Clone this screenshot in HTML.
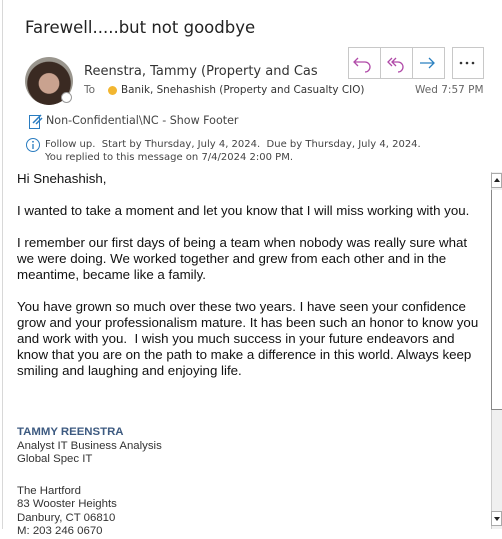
<!DOCTYPE html>
<html><head><meta charset="utf-8"><style>
body{margin:0;width:502px;height:529px;overflow:hidden;background:#fff;font-family:"Liberation Sans",Arial,sans-serif;position:relative}
.a{position:absolute;white-space:nowrap}
.seg{font-family:"DejaVu Sans","Liberation Sans",sans-serif}
.btn{position:absolute;top:47px;height:32px;border:1px solid #c8c8c8;box-sizing:border-box}
.body{position:absolute;left:17px;top:171px;font-size:13.3px;line-height:16px;color:#111}
.body p{margin:0 0 16px 0}
.sig{font-size:11.4px;line-height:13.5px;color:#333}
</style></head><body>
<div class="a" style="left:2px;top:0;width:1px;height:529px;background:#d8d8d8"></div>
<div class="a seg" style="left:25px;top:18px;font-size:16.5px;color:#222">Farewell.....but not goodbye</div>
<div class="btn" style="left:348px;width:97px"></div>
<div class="a" style="left:380px;top:47px;width:1px;height:32px;background:#c8c8c8"></div>
<div class="a" style="left:412px;top:47px;width:1px;height:32px;background:#c8c8c8"></div>
<div class="btn" style="left:452px;width:32px"></div>
<svg class="a" style="left:348px;top:47px" width="136" height="32" viewBox="0 0 136 32" fill="none">
<path d="M10 11 L6 15 L10 19 M6 15 H17 A5 5 0 0 1 17 25" stroke="#b04aa8" stroke-width="1.3"/>
<path d="M44 11 L40 15 L44 19 M48 11 L44 15 L48 19 M44 15 H50 A5 5 0 0 1 50 25" stroke="#b04aa8" stroke-width="1.3"/>
<path d="M72 16 H86 M81 11 L86 16 L81 21" stroke="#2a80c0" stroke-width="1.3"/>
<circle cx="113" cy="16" r="1.3" fill="#333"/><circle cx="119" cy="16" r="1.3" fill="#333"/><circle cx="125" cy="16" r="1.3" fill="#333"/>
</svg>
<div class="a" style="left:25px;top:57px;width:48px;height:48px;border-radius:50%;background:radial-gradient(circle at 50% 55%,#c9a28f 0 28%,#3a2a22 30% 60%,#9a968e 62%)"></div>
<div class="a" style="left:61px;top:92px;width:11px;height:11px;border-radius:50%;background:#fff;border:1px solid #999;box-sizing:border-box"></div>
<div class="a seg" style="left:84px;top:64px;font-size:13px;color:#333">Reenstra, Tammy (Property and Cas</div>
<div class="a seg" style="left:84px;top:84px;font-size:10.5px;color:#666">To</div>
<div class="a" style="left:108px;top:86px;width:9px;height:9px;border-radius:50%;background:#f2b630"></div>
<div class="a seg" style="left:121px;top:84px;font-size:10.4px;color:#333">Banik, Snehashish (Property and Casualty CIO)</div>
<div class="a seg" style="left:415px;top:84px;font-size:10.5px;color:#666">Wed 7:57 PM</div>
<svg class="a" style="left:28px;top:112px" width="16" height="18" viewBox="0 0 16 18" fill="none"><rect x="1.5" y="3.5" width="10" height="13" stroke="#2a7cc0"/><path d="M5 11 L13 3 M8 12 L14 6" stroke="#2a7cc0" stroke-width="1.5"/></svg>
<div class="a seg" style="left:46px;top:114px;font-size:11.1px;color:#444">Non-Confidential\NC - Show Footer</div>
<svg class="a" style="left:25px;top:137px" width="16" height="16" viewBox="0 0 16 16" fill="none"><circle cx="8" cy="8" r="6.5" stroke="#2a7cc0"/><path d="M8 7 V12" stroke="#2a7cc0" stroke-width="1.3"/><circle cx="8" cy="4.8" r="0.9" fill="#2a7cc0"/></svg>
<div class="a seg" style="left:45px;top:138px;font-size:10px;color:#444;line-height:13px">Follow up.&nbsp; Start by Thursday, July 4, 2024.&nbsp; Due by Thursday, July 4, 2024.<br>You replied to this message on 7/4/2024 2:00 PM.</div>
<div class="body">
<p>Hi Snehashish,</p>
<p>I wanted to take a moment and let you know that I will miss working with you.</p>
<p>I remember our first days of being a team when nobody was really sure what<br>we were doing. We worked together and grew from each other and in the<br>meantime, became like a family.</p>
<p>You have grown so much over these two years. I have seen your confidence<br>grow and your professionalism mature. It has been such an honor to know you<br>and work with you.&nbsp; I wish you much success in your future endeavors and<br>know that you are on the path to make a difference in this world. Always keep<br>smiling and laughing and enjoying life.</p>
</div>
<div class="a sig" style="left:17px;top:426px"><b style="color:#3d5a80">TAMMY REENSTRA</b><br>Analyst IT Business Analysis<br>Global Spec IT<br><div style="height:18px"></div>The Hartford<br>83 Wooster Heights<br>Danbury, CT 06810<br>M: 203 246 0670</div>
<div class="a" style="left:491px;top:172px;width:11px;height:357px;background:#f0f0f0;border-left:1px solid #ccc"></div>
<div class="a" style="left:491px;top:173px;width:11px;height:15px;background:#fff;border:1px solid #aaa;box-sizing:border-box"></div>
<div class="a" style="left:494px;top:178px;width:0;height:0;border-left:3px solid transparent;border-right:3px solid transparent;border-bottom:4px solid #222"></div>
<div class="a" style="left:491px;top:190px;width:11px;height:220px;background:#fff;border-left:1px solid #888;border-bottom:1px solid #888;box-sizing:border-box"></div>
<div class="a" style="left:491px;top:511px;width:11px;height:15px;background:#fff;border:1px solid #aaa;box-sizing:border-box"></div>
<div class="a" style="left:494px;top:517px;width:0;height:0;border-left:3px solid transparent;border-right:3px solid transparent;border-top:4px solid #222"></div>
</body></html>
